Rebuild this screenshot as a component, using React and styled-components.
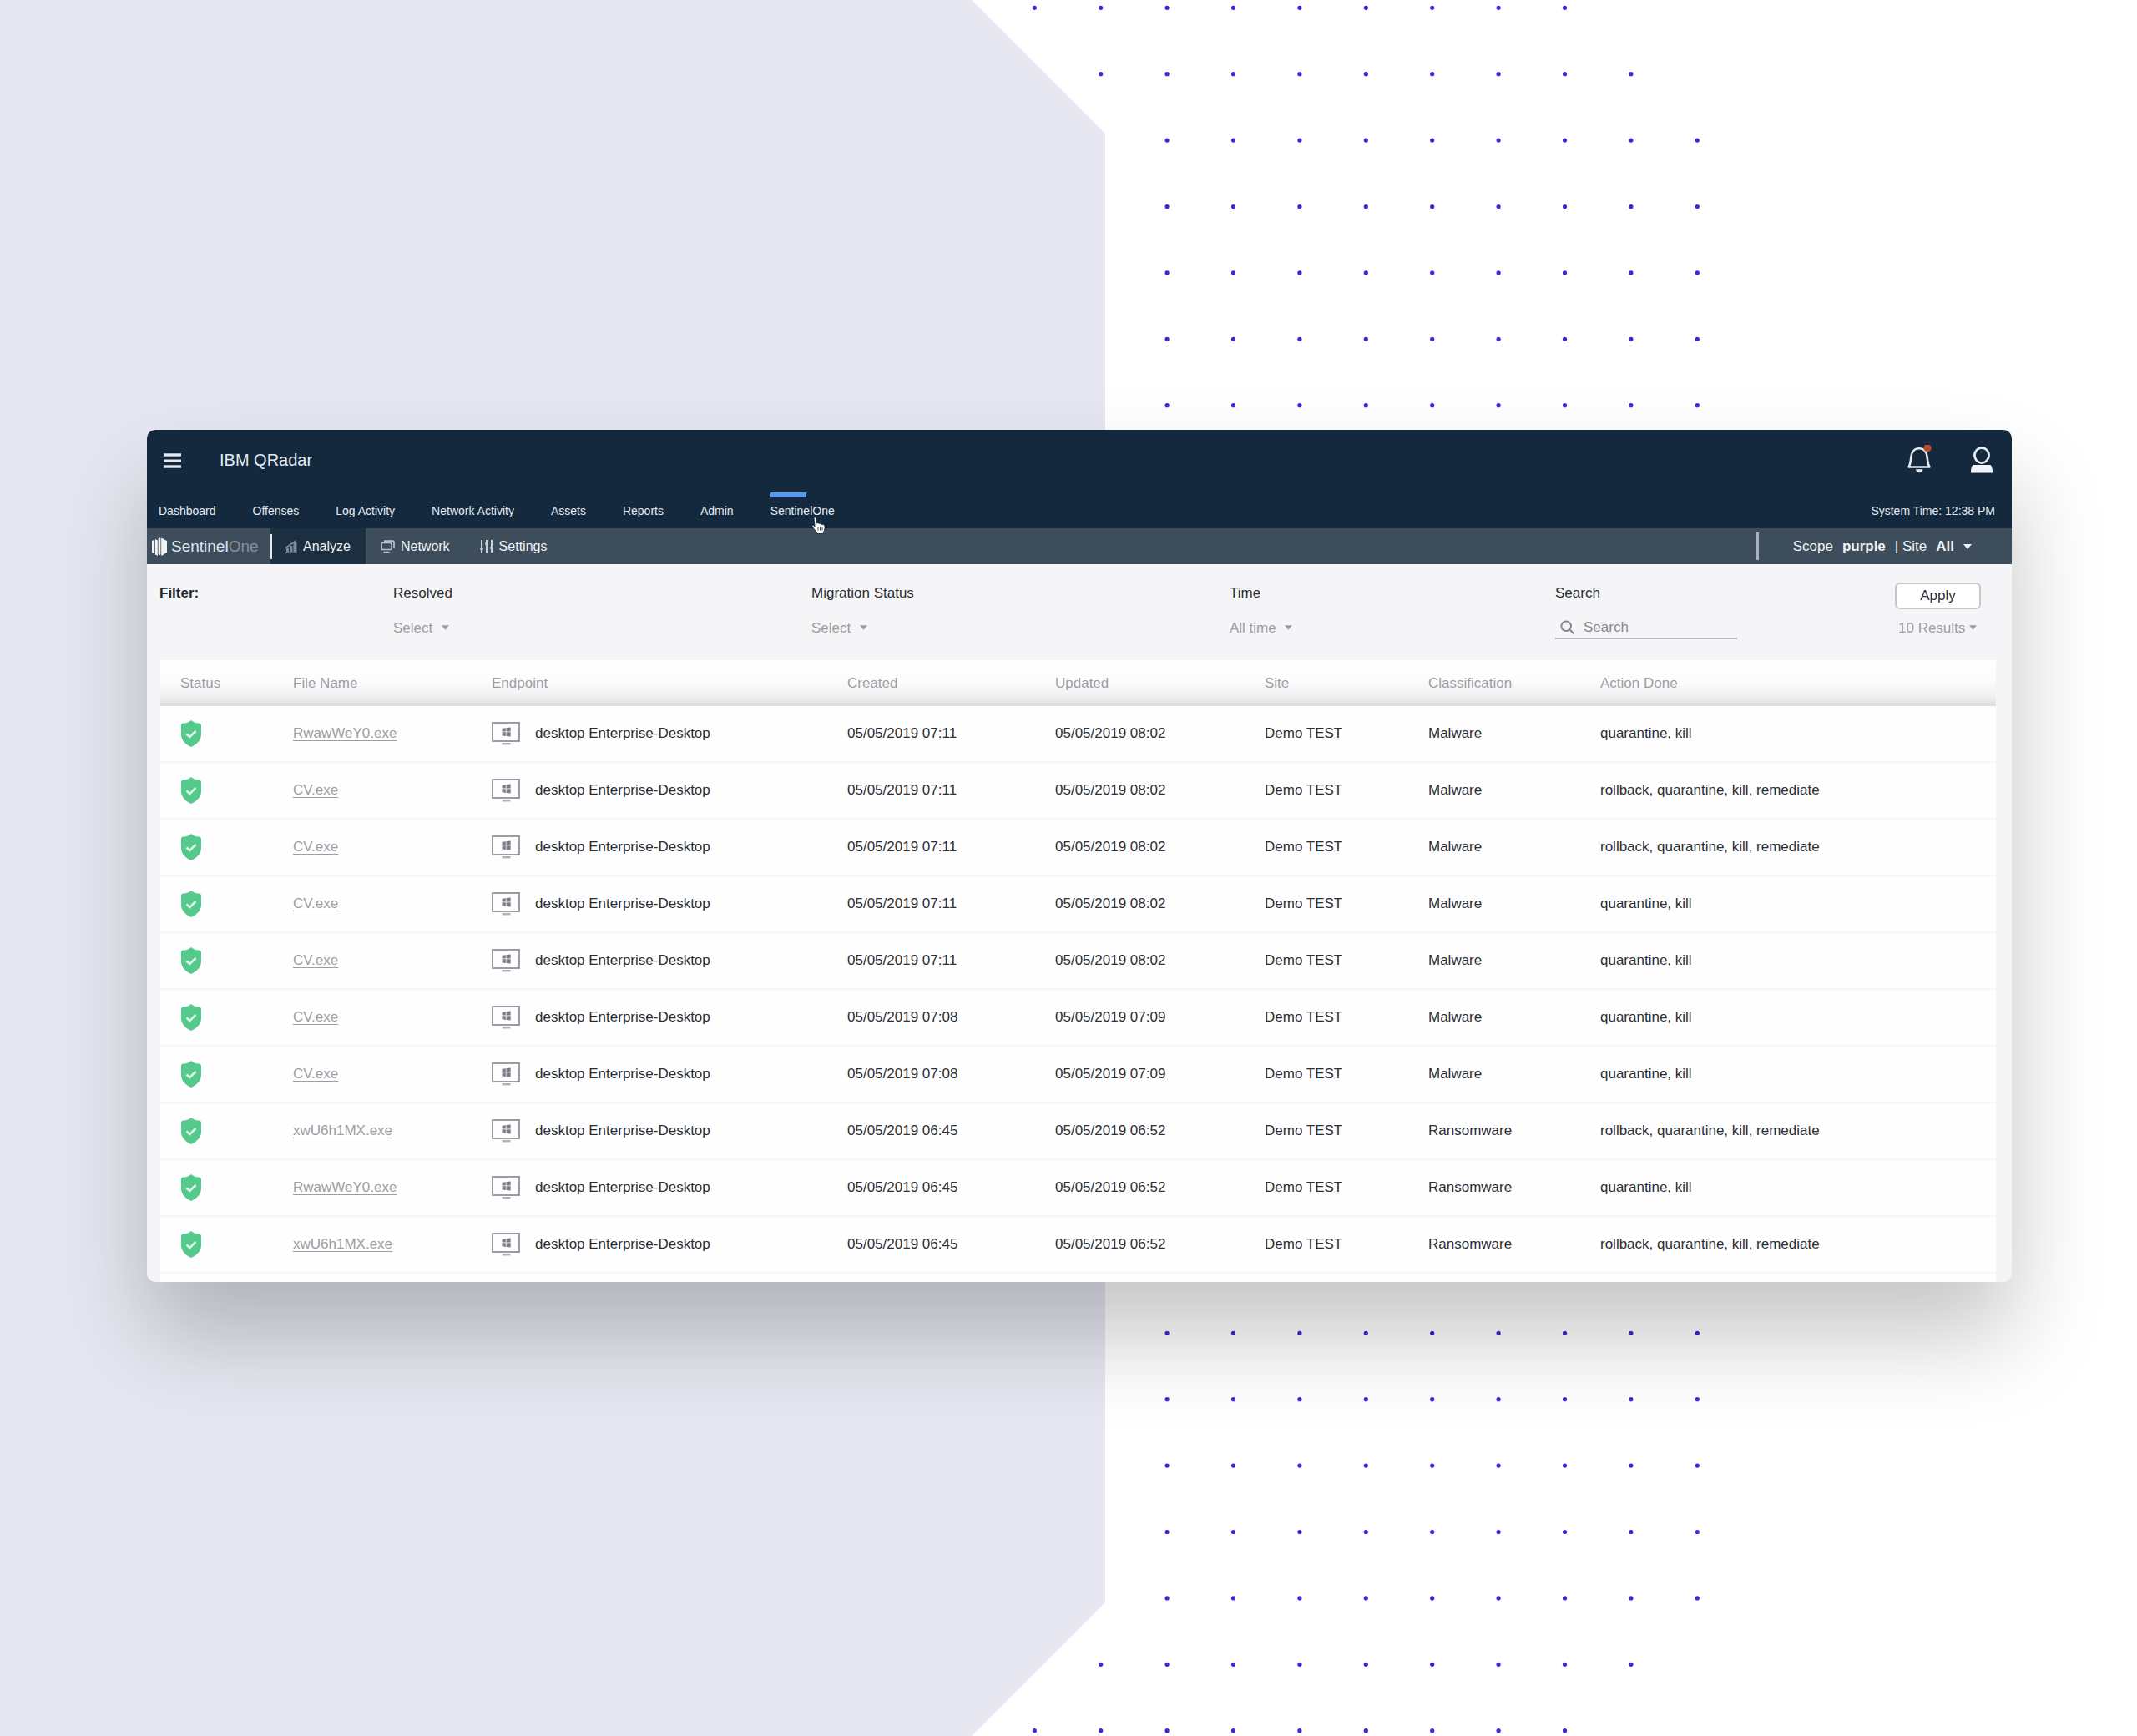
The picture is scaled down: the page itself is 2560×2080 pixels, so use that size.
import React, { useState } from "react";
import styled, { createGlobalStyle } from "styled-components";

const navItems = [
  "Dashboard",
  "Offenses",
  "Log Activity",
  "Network Activity",
  "Assets",
  "Reports",
  "Admin",
  "SentinelOne",
];

const columns = [
  { title: "Status", width: 159 },
  { title: "File Name", width: 238 },
  { title: "Endpoint", width: 426 },
  { title: "Created", width: 249 },
  { title: "Updated", width: 251 },
  { title: "Site", width: 196 },
  { title: "Classification", width: 206 },
  { title: "Action Done", width: 474 },
];

const shortAction = "quarantine, kill";
const fullAction = "rollback, quarantine, kill, remediate";

const threats = [
  ["RwawWeY0.exe", "07:11", "08:02", "Malware", shortAction],
  ["CV.exe", "07:11", "08:02", "Malware", fullAction],
  ["CV.exe", "07:11", "08:02", "Malware", fullAction],
  ["CV.exe", "07:11", "08:02", "Malware", shortAction],
  ["CV.exe", "07:11", "08:02", "Malware", shortAction],
  ["CV.exe", "07:08", "07:09", "Malware", shortAction],
  ["CV.exe", "07:08", "07:09", "Malware", shortAction],
  ["xwU6h1MX.exe", "06:45", "06:52", "Ransomware", fullAction],
  ["RwawWeY0.exe", "06:45", "06:52", "Ransomware", shortAction],
  ["xwU6h1MX.exe", "06:45", "06:52", "Ransomware", fullAction],
];

// dot pattern: 27 rows of 9, the two outer rows on each end step to the left
const DOT_STEP = 79.4;
const dots = [];
for (let row = 0; row < 27; row++) {
  const shift = Math.min(row, 26 - row, 2);
  for (let col = 0; col < 9; col++) {
    dots.push({
      x: 1239.3 + (col + shift) * DOT_STEP,
      y: 9.3 + row * DOT_STEP,
    });
  }
}

const Backdrop = () => (
  <BackdropSvg
    viewBox="0 0 2560 2080"
    preserveAspectRatio="xMidYMin slice"
    aria-hidden="true"
  >
    <path d="M0 0H1164L1324 160V1920L1164 2080H0Z" fill="#e7e7f1" />
    {dots.map((dot, i) => (
      <circle key={i} cx={dot.x} cy={dot.y} r="2.6" fill="#4f1fd8" />
    ))}
  </BackdropSvg>
);

const MenuIcon = () => (
  <svg width="21" height="18" viewBox="0 0 21 18" fill="#e3eaf1">
    <rect width="21" height="3.4" y="0.3" />
    <rect width="21" height="3" y="7.5" />
    <rect width="21" height="3.4" y="14.3" />
  </svg>
);

const BellIcon = () => (
  <svg width="32" height="38" viewBox="0 0 32 38" fill="none">
    <path
      d="M3.5 26.5H28.5C26.5 23.5 26.2 20 25.6 14.5C25 8.5 21.5 4.2 16 4.2C10.5 4.2 7 8.5 6.4 14.5C5.8 20 5.5 23.5 3.5 26.5Z"
      stroke="#e3eaf1"
      strokeWidth="2.6"
      strokeLinejoin="round"
    />
    <path
      d="M12 29.3H20.5C20 32.2 18.5 33.2 16.2 33.2C14 33.2 12.5 32.2 12 29.3Z"
      fill="#e3eaf1"
    />
    <circle cx="26" cy="3.8" r="4.6" fill="#c04a27" />
  </svg>
);

const UserIcon = () => (
  <svg width="26" height="34" viewBox="0 0 26 34" fill="none">
    <ellipse cx="13" cy="10.5" rx="8.6" ry="9" stroke="#e3eaf1" strokeWidth="2.8" />
    <path d="M3 22H23C25 22.5 26 26 26 31.5H0C0 26 1 22.5 3 22Z" fill="#f1f5fa" />
  </svg>
);

const LogoMark = () => (
  <svg width="18" height="22" viewBox="0 0 18 22" fill="#f2f4f6">
    <path d="M0 4L3.2 2.5V19.5L0 18Z" />
    <path d="M4 2L6.8 3.5V22L4 20.5Z" />
    <path d="M7.6 1.5L9 0L10.4 1.5V20L9 21.5L7.6 20Z" />
    <path d="M11.2 0.5L14 2V20.5L11.2 22Z" />
    <path d="M14.8 2.5L18 4V18L14.8 19.5Z" />
  </svg>
);

const AnalyzeIcon = () => (
  <svg width="14" height="16" viewBox="0 0 14 16" fill="#7d8b98">
    <rect x="1" y="10" width="3" height="4" />
    <rect x="5" y="7" width="3.4" height="7" />
    <rect x="9.4" y="3" width="4" height="11" />
    <path d="M0 8.5L12.5 0V2.2L0 10.5Z" />
    <rect x="0" y="14.4" width="14" height="1.6" />
  </svg>
);

const NetworkIcon = () => (
  <svg width="17" height="16" viewBox="0 0 17 16" fill="none" stroke="#b9c2ca" strokeWidth="1.7">
    <rect x="1" y="3.5" width="12" height="8" rx="1.5" />
    <path d="M4 1.2H14.5C15.5 1.2 16 1.8 16 2.7V9.5" />
    <path d="M3.5 14.5H10.5" />
  </svg>
);

const SettingsIcon = () => (
  <svg width="16" height="15" viewBox="0 0 16 15" fill="#c9d0d7">
    <rect x="1" y="0" width="2" height="15" />
    <rect x="7" y="0" width="2" height="15" />
    <rect x="13" y="0" width="2" height="15" />
    <rect x="0.3" y="9" width="3.4" height="3" />
    <rect x="6.3" y="3" width="3.4" height="3" />
    <rect x="12.3" y="8" width="3.4" height="3" />
  </svg>
);

const Caret = ({ size = 9 }) => (
  <CaretSvg width={size} height="6" viewBox="0 0 10 6">
    <path d="M0 0H10L5 6Z" fill="currentColor" />
  </CaretSvg>
);

const SearchIcon = () => (
  <svg width="18" height="18" viewBox="0 0 18 18" fill="none" stroke="#85898e" strokeWidth="2">
    <circle cx="7.2" cy="7.2" r="5.8" />
    <path d="M11.5 11.5L16.5 16.5" />
  </svg>
);

const ShieldIcon = () => (
  <svg width="26" height="32" viewBox="0 0 26 32" role="img" aria-label="Resolved">
    <path
      d="M13 0C14.5 1.6 18.5 3.6 22.5 3.6C24 3.6 25 4.6 25 6.5V17.5C25 24 19.5 29 13 32C6.5 29 1 24 1 17.5V6.5C1 4.6 2 3.6 3.5 3.6C7.5 3.6 11.5 1.6 13 0Z"
      fill="#55c98c"
    />
    <path
      d="M7.5 16.5L11.3 20L18.5 13"
      stroke="#dcf6e8"
      strokeWidth="2.6"
      fill="none"
    />
  </svg>
);

const MonitorIcon = () => (
  <svg width="34" height="28" viewBox="0 0 34 28" fill="#7e7e89" aria-hidden="true">
    <rect x="1" y="1" width="32" height="22" fill="none" stroke="#9c9ca7" strokeWidth="2" />
    <rect x="12.5" y="25" width="10" height="2.4" fill="#b0b0b9" />
    <path d="M12.5 7.8L16.8 7.2V11.6H12.5Z" />
    <path d="M17.5 7.1L22.7 6.5V11.6H17.5Z" />
    <path d="M12.5 12.3H16.8V16.9L12.5 16.3Z" />
    <path d="M17.5 12.3H22.7V17.6L17.5 17Z" />
  </svg>
);

const HandPointer = () => (
  <Pointer width="18" height="22" viewBox="0 0 18 22" aria-hidden="true">
    <path
      d="M3 2C3 0.6 5.4 0.6 5.6 2L6.4 8C8 7.3 9 7.8 9.4 8.6C10.8 8 11.9 8.5 12.3 9.5C14 9 15.6 9.8 15.9 11.5C16.3 14 15.8 16.5 14.5 18.5L14.2 20.5H6.8L6.3 18.5C4.6 16.8 2.5 14.2 1 11.5C0.8 10.2 2.4 9.9 3.2 11L4.1 12.2Z"
      fill="#fff"
      stroke="#1b2733"
      strokeWidth="0.9"
    />
    <path
      d="M8 12.5V16.5M10.5 12.5V16.5M13 12.5V16.5"
      stroke="#444e59"
      strokeWidth="1"
    />
  </Pointer>
);

const FilterSelect = ({ id, label, value }) => (
  <Field>
    <FieldLabel htmlFor={id}>{label}</FieldLabel>
    <SelectWrapper>
      <Select id={id} defaultValue={value}>
        <option>{value}</option>
      </Select>
      <Caret />
    </SelectWrapper>
  </Field>
);

const App = () => {
  const [search, setSearch] = useState("");

  return (
    <>
      <GlobalStyle />
      <Page>
        <Backdrop />
        <Window>
          <Header>
            <TitleBar>
              <IconButton aria-label="Menu">
                <MenuIcon />
              </IconButton>
              <ProductName>IBM QRadar</ProductName>
              <HeaderIcons>
                <IconButton aria-label="Notifications">
                  <BellIcon />
                </IconButton>
                <IconButton aria-label="Account">
                  <UserIcon />
                </IconButton>
              </HeaderIcons>
            </TitleBar>
            <Nav>
              {navItems.map((item) => (
                <NavLink key={item} href="#" $active={item === "SentinelOne"}>
                  {item}
                  {item === "SentinelOne" && <HandPointer />}
                </NavLink>
              ))}
              <SystemTime>System Time: 12:38 PM</SystemTime>
            </Nav>
          </Header>

          <SubNav>
            <Logo>
              <LogoMark />
              <LogoText>
                Sentinel<LogoThin>One</LogoThin>
              </LogoText>
            </Logo>
            <Tab href="#" $active>
              <AnalyzeIcon />
              Analyze
            </Tab>
            <Tab href="#">
              <NetworkIcon />
              Network
            </Tab>
            <Tab href="#">
              <SettingsIcon />
              Settings
            </Tab>
            <Scope>
              <span>Scope</span>
              <b>purple</b>
              <span>| Site</span>
              <b>All</b>
              <Caret size={10} />
            </Scope>
          </SubNav>

          <Filters>
            <FilterTitle>Filter:</FilterTitle>
            <FilterSelect id="resolved" label="Resolved" value="Select" />
            <FilterSelect id="migration" label="Migration Status" value="Select" />
            <FilterSelect id="time" label="Time" value="All time" />
            <Field>
              <FieldLabel htmlFor="search">Search</FieldLabel>
              <SearchBox>
                <SearchIcon />
                <SearchInput
                  id="search"
                  placeholder="Search"
                  value={search}
                  onChange={(e) => setSearch(e.target.value)}
                />
              </SearchBox>
            </Field>
            <Actions>
              <ApplyButton>Apply</ApplyButton>
              <SelectWrapper $tight>
                <Select aria-label="Number of results" defaultValue="10 Results" $tight>
                  <option>10 Results</option>
                </Select>
                <Caret />
              </SelectWrapper>
            </Actions>
          </Filters>

          <TablePanel>
            <Table>
              <colgroup>
                {columns.map((column) => (
                  <col key={column.title} width={column.width} />
                ))}
              </colgroup>
              <thead>
                <HeadRow>
                  {columns.map((column) => (
                    <HeadCell key={column.title}>{column.title}</HeadCell>
                  ))}
                </HeadRow>
              </thead>
              <tbody>
                {threats.map(([file, created, updated, type, action], i) => (
                  <tr key={i}>
                    <Cell>
                      <ShieldIcon />
                    </Cell>
                    <Cell>
                      <FileLink href="#">{file}</FileLink>
                    </Cell>
                    <Cell>
                      <Endpoint>
                        <MonitorIcon />
                        desktop Enterprise-Desktop
                      </Endpoint>
                    </Cell>
                    <Cell>05/05/2019 {created}</Cell>
                    <Cell>05/05/2019 {updated}</Cell>
                    <Cell>Demo TEST</Cell>
                    <Cell>{type}</Cell>
                    <Cell>{action}</Cell>
                  </tr>
                ))}
              </tbody>
            </Table>
          </TablePanel>
        </Window>
      </Page>
    </>
  );
};

export default App;

const GlobalStyle = createGlobalStyle`
  * {
    box-sizing: border-box;
  }

  body {
    margin: 0;
    background: #fff;
    color: #2b2e34;
    font-family: "Liberation Sans", Arial, Helvetica, sans-serif;
    font-size: 17px;
  }

  button, input, select {
    font: inherit;
    color: inherit;
  }

  svg {
    display: block;
    flex-shrink: 0;
  }
`;

const Page = styled.main`
  position: relative;
  min-height: 100vh;
  padding: 515px 150px 0 176px;
  overflow: hidden;
`;

const BackdropSvg = styled.svg`
  position: absolute;
  top: 0;
  left: 0;
  width: 100%;
  height: 100%;
`;

const Window = styled.div`
  position: relative;
  overflow: hidden;
  border-radius: 10px;
  background: #f5f5f8;
  box-shadow: 0 64px 112px rgba(0, 0, 0, 0.23);
`;

const Header = styled.header`
  background: #14293e;
  color: #e3eaf1;
`;

const TitleBar = styled.div`
  display: flex;
  align-items: center;
  height: 73px;
  padding: 0 23px 0 20px;
`;

const IconButton = styled.button`
  padding: 0;
  border: none;
  background: none;
  cursor: pointer;
`;

const ProductName = styled.div`
  margin-left: 46px;
  font-size: 20px;
`;

const HeaderIcons = styled.div`
  display: flex;
  align-items: center;
  gap: 46px;
  margin-left: auto;
`;

const Nav = styled.nav`
  display: flex;
  gap: 44px;
  height: 45px;
  padding: 0 20px 0 14px;
  font-size: 14px;
  line-height: 16px;
`;

const NavLink = styled.a`
  position: relative;
  padding-top: 16px;
  color: inherit;
  text-decoration: none;
  white-space: nowrap;

  &::before {
    content: "";
    position: absolute;
    top: 2px;
    left: 0;
    width: 43px;
    height: 6px;
    background: ${({ $active }) => ($active ? "#579aea" : "transparent")};
  }
`;

const Pointer = styled.svg`
  position: absolute;
  right: 10px;
  bottom: -8px;
  z-index: 1;
`;

const SystemTime = styled.div`
  margin-left: auto;
  padding-top: 16px;
`;

const SubNav = styled.div`
  display: flex;
  align-items: stretch;
  height: 43px;
  background: #3e4d5c;
  color: #f0f3f6;
`;

const Logo = styled.div`
  display: flex;
  align-items: center;
  gap: 5px;
  width: 148px;
  padding-left: 6px;
`;

const LogoText = styled.div`
  font-size: 19px;
  color: #dfe4e8;
`;

const LogoThin = styled.span`
  color: #84909b;
`;

const Tab = styled.a`
  position: relative;
  display: flex;
  align-items: center;
  gap: 7px;
  padding: 0 18px;
  background: ${({ $active }) => ($active ? "#1c2f41" : "transparent")};
  color: inherit;
  font-size: 16px;
  text-decoration: none;

  &::before {
    content: "";
    position: absolute;
    top: 7px;
    bottom: 6px;
    left: 0;
    width: 2px;
    background: ${({ $active }) => ($active ? "#e4e8eb" : "transparent")};
  }
`;

const Scope = styled.button`
  display: flex;
  align-items: center;
  gap: 11px;
  margin: 5px 48px 5px auto;
  padding: 0 0 0 41px;
  border: none;
  border-left: 3px solid #a8b2bb;
  background: none;
  cursor: pointer;
`;

const CaretSvg = styled.svg`
  pointer-events: none;
`;

const Filters = styled.form`
  display: grid;
  grid-template-columns: 280fr 501fr 501fr 390fr 407fr 121fr;
  padding: 22px 19px 25px 15px;
`;

const FilterTitle = styled.div`
  color: #24272c;
  font-weight: bold;
  line-height: 26px;
`;

const Field = styled.div`
  display: flex;
  flex-direction: column;
  align-items: flex-start;
  gap: 16px;
`;

const FieldLabel = styled.label`
  line-height: 26px;
`;

const SelectWrapper = styled.div`
  display: flex;
  align-items: center;
  height: 24px;
  margin-left: ${({ $tight }) => ($tight ? "4px" : "0")};
  color: #9a9da2;

  ${CaretSvg} {
    margin-left: -9px;
  }
`;

const Select = styled.select`
  padding: 0 ${({ $tight }) => ($tight ? "13px" : "19px")} 0 0;
  border: none;
  background: none;
  appearance: none;
`;

const SearchBox = styled.div`
  display: flex;
  align-items: center;
  gap: 10px;
  width: 218px;
  height: 26px;
  padding-left: 6px;
  border-bottom: 2px solid #b9bcc1;
`;

const SearchInput = styled.input`
  width: 100%;
  padding: 0;
  border: none;
  outline: none;
  background: none;

  &::placeholder {
    color: #85898e;
  }
`;

const Actions = styled.div`
  display: flex;
  flex-direction: column;
  align-items: flex-start;
  gap: 10px;
`;

const ApplyButton = styled.button`
  width: 103px;
  height: 32px;
  padding: 0;
  border: 2px solid #c6c7cb;
  border-radius: 6px;
  background: #fff;
  cursor: pointer;
`;

const TablePanel = styled.div`
  margin: 0 19px 0 16px;
  padding-bottom: 10px;
  background: #fefefe;
`;

const Table = styled.table`
  width: 100%;
  border-spacing: 0;
  table-layout: fixed;
`;

const HeadRow = styled.tr`
  background: linear-gradient(#fff 0%, #fcfcfd 45%, #f1f1f3 78%, #dcdddf 100%);
`;

const HeadCell = styled.th`
  height: 55px;
  padding: 0;
  color: #9b9ea3;
  font-weight: normal;
  text-align: left;

  &:first-child {
    padding-left: 24px;
  }
`;

const Cell = styled.td`
  height: 68px;
  padding: 0;
  border-bottom: 2px solid #f7f7f8;

  &:first-child {
    padding-left: 24px;
  }
`;

const FileLink = styled.a`
  color: #9a9ea4;
  text-underline-offset: 3px;
`;

const Endpoint = styled.div`
  display: flex;
  align-items: center;
  gap: 18px;
`;
